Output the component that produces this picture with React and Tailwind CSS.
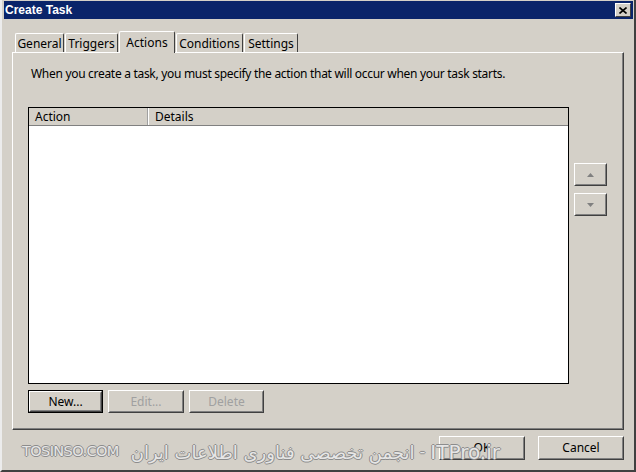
import React from "react";

const ui = { fontFamily: '"Noto Sans", "Open Sans", sans-serif' };

const Tab = ({ label, w, active }) => {
  if (active) {
    return (
      <div className={`${w} h-[22px] relative z-10 -mb-px bg-[#d4d0c8] border-l border-t border-r border-t-white border-l-white border-r-[#404040] rounded-t-[2px] flex items-start justify-center pt-[2px] text-[12px] text-black`}>
        {label}
      </div>
    );
  }
  return (
    <div className={`${w} h-[19px] bg-[#d4d0c8] border-l border-t border-r border-t-white border-l-white border-r-[#404040] rounded-t-[2px] flex items-start justify-center pt-[1px] text-[12px] text-black`}>
      {label}
    </div>
  );
};

const Btn = ({ children, w, h = "h-[23px]", disabled, def }) => (
  <div className={`${w} ${h} ${def ? "border border-black" : ""}`}>
    <div className="h-full border border-t-white border-l-white border-r-[#404040] border-b-[#404040]">
      <div
        className={`h-full border border-transparent border-r-[#808080] border-b-[#808080] flex items-center justify-center text-[12px] ${
          disabled ? "text-[#a0a0a0]" : "text-black"
        }`}
      >
        {children}
      </div>
    </div>
  </div>
);

const Arrow = ({ up }) => (
  <svg width="7" height="4" viewBox="0 0 7 4">
    {up ? (
      <path d="M3.5 0 L7 4 L0 4 Z" fill="#808080" />
    ) : (
      <path d="M0 0 L7 0 L3.5 4 Z" fill="#808080" />
    )}
  </svg>
);

const wm =
  "text-[#e6e6e6] [text-shadow:1px_0_0_#8c8c8c,-1px_0_0_#8c8c8c,0_1px_0_#8c8c8c,0_-1px_0_#8c8c8c]";

export default function App() {
  return (
    <div
      className="w-[636px] h-[472px] bg-[#d4d0c8] relative overflow-hidden border-l-2 border-r-2 border-b-2 border-l-[#ececec] border-r-[#404040] border-b-[#404040] pl-[2px] pr-px pt-px"
      style={ui}
    >
      {/* Title bar */}
      <div className="h-[18px] bg-[#0a246a] flex items-center justify-between pl-px pr-[2px]">
        <span
          className="text-white font-bold text-[12px] leading-none"
          style={{ fontFamily: '"Liberation Sans", Arial, sans-serif' }}
        >
          Create Task
        </span>
        <div className="w-[16px] h-[14px] bg-[#d4d0c8] border border-t-white border-l-white border-r-[#404040] border-b-[#404040] flex items-center justify-center">
          <svg width="8" height="7" viewBox="0 0 8 7">
            <path d="M0.5 0.5 L7.5 6.5 M7.5 0.5 L0.5 6.5" stroke="#000" strokeWidth="1.6" />
          </svg>
        </div>
      </div>

      {/* Tabs */}
      <div className="mt-[11px] ml-[11px] flex items-end gap-px h-[22px]">
        <Tab label="General" w="w-[49px]" />
        <Tab label="Triggers" w="w-[53px]" />
        <Tab label="Actions" w="w-[56px]" active />
        <Tab label="Conditions" w="w-[67px]" />
        <Tab label="Settings" w="w-[54px]" />
      </div>

      {/* Panel */}
      <div className="ml-[8px] w-[612px] h-[378px] border-l border-t border-l-white border-t-white border-r border-b border-r-[#404040] border-b-[#404040]">
        <div className="h-full border-r border-b border-r-[#808080] border-b-[#808080] pl-[18px] pt-[13px]">
          <div className="text-[12px] leading-[16px] tracking-[-0.3px] text-black">
            When you create a task, you must specify the action that will occur when your task starts.
          </div>

          <div className="flex mt-[25px] -ml-[3px]">
            <div className="w-[541px] h-[277px] border border-black bg-white flex flex-col">
              <div className="h-[18px] flex bg-[#d4d0c8] border-b border-b-[#808080] text-[12px] text-black">
                <div className="w-[119px] border-r border-r-[#a0a0a0] pl-[6px] flex items-center">Action</div>
                <div className="w-px bg-white" />
                <div className="flex-1 pl-[6px] flex items-center">Details</div>
              </div>
            </div>
            <div className="ml-[5px] mt-[56px] flex flex-col gap-[7px]">
              <Btn w="w-[33px]" h="h-[23px]">
                <Arrow up />
              </Btn>
              <Btn w="w-[33px]" h="h-[23px]">
                <Arrow />
              </Btn>
            </div>
          </div>

          <div className="flex gap-[5px] mt-[6px] -ml-[3px]">
            <Btn w="w-[75px]" def>
              New...
            </Btn>
            <Btn w="w-[76px]" disabled>
              Edit...
            </Btn>
            <Btn w="w-[75px]" disabled>
              Delete
            </Btn>
          </div>
        </div>
      </div>

      {/* Dialog buttons */}
      <div className="flex justify-end gap-[13px] mt-[6px] pr-[9px]">
        <Btn w="w-[86px]" h="h-[24px]">
          OK
        </Btn>
        <Btn w="w-[86px]" h="h-[24px]">
          Cancel
        </Btn>
      </div>

      {/* Watermark */}
      <div
        className="absolute left-[20px] top-[437px] flex items-center pointer-events-none"
        style={{ fontFamily: '"DejaVu Sans", "Liberation Sans", sans-serif' }}
      >
        <span className={`${wm} text-[14.5px] tracking-[-0.6px]`}>TOSINSO.COM</span>
        <span dir="rtl" className={`${wm} text-[18px] ml-[12px]`}>
          انجمن تخصصی فناوری اطلاعات ایران
        </span>
        <span className={`${wm} text-[16px] ml-[5px]`}>-</span>
        <span className={`${wm} text-[20px] ml-[5px]`}>ITPro.ir</span>
      </div>
    </div>
  );
}
